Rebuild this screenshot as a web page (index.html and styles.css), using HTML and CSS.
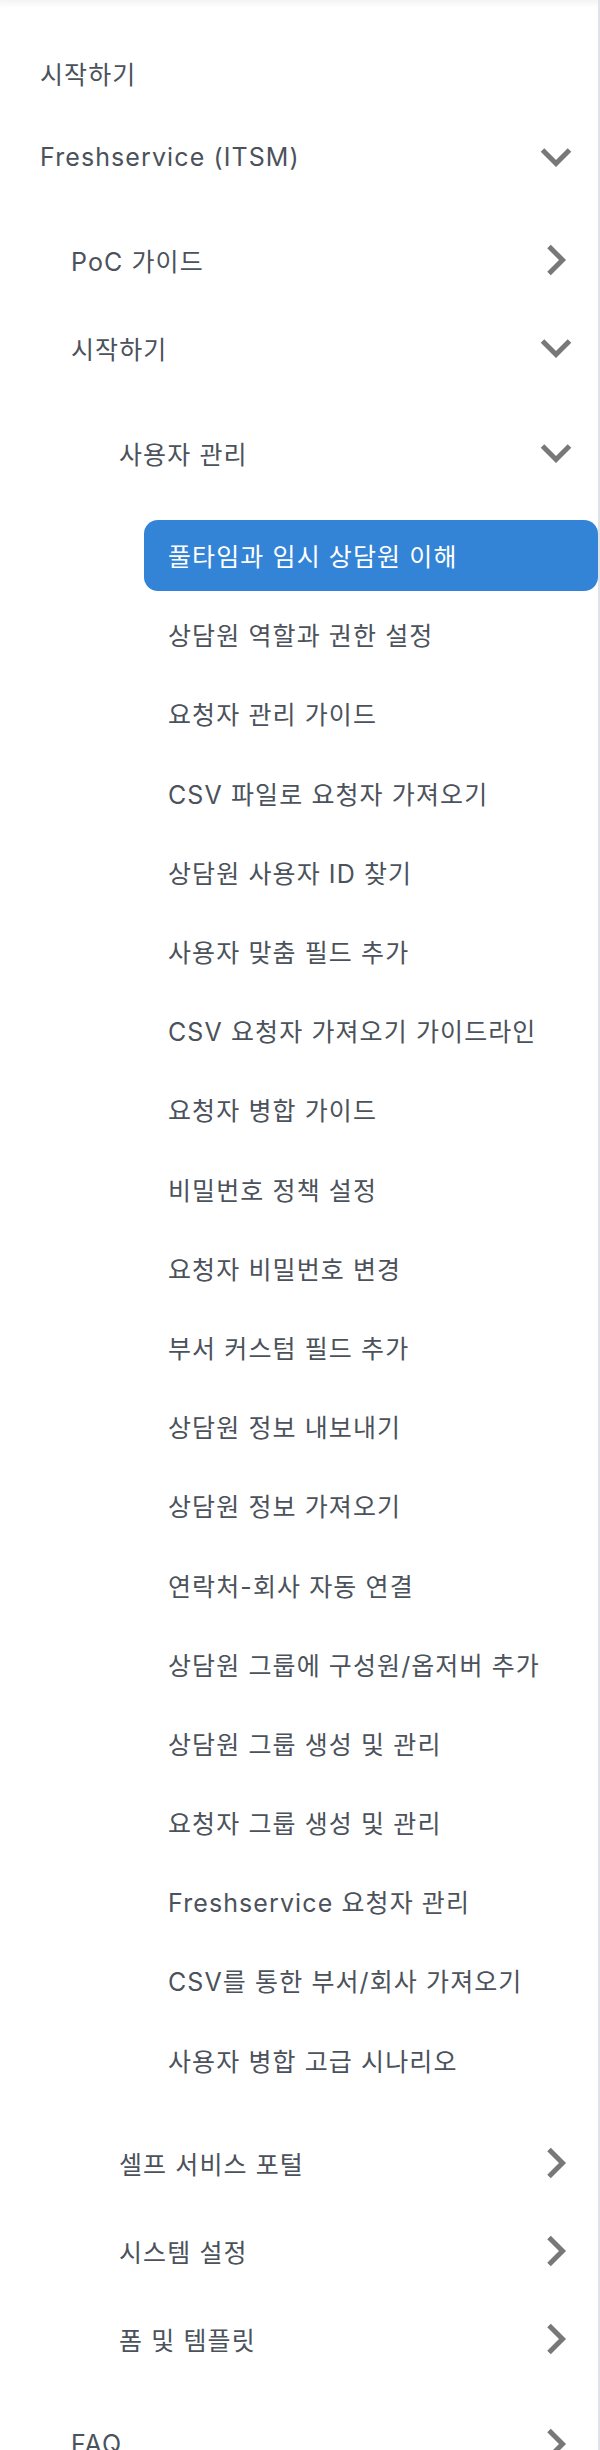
FILE: index.html
```html
<!DOCTYPE html>
<html lang="ko">
<head>
<meta charset="utf-8">
<title>Freshservice 가이드</title>
<link rel="stylesheet" href="styles.css">
</head>
<body>
<nav class="sidebar">
  <ul class="tree">
    <li><div class="row r0"><span class="label">시작하기</span></div></li>
    <li>
      <div class="row r0"><span class="label">Freshservice (ITSM)</span>
        <svg class="chev" viewBox="0 0 40 40"><path d="M6.5 13 L20 26.5 L33.5 13"/></svg>
      </div>
      <ul class="tree sub">
        <li><div class="row r1"><span class="label">PoC 가이드</span>
          <svg class="chev" viewBox="0 0 40 40"><path d="M13 6.5 L26.5 20 L13 33.5"/></svg></div></li>
        <li>
          <div class="row r1"><span class="label">시작하기</span>
            <svg class="chev" viewBox="0 0 40 40"><path d="M6.5 13 L20 26.5 L33.5 13"/></svg></div>
          <ul class="tree sub">
            <li>
              <div class="row r2"><span class="label">사용자 관리</span>
                <svg class="chev" viewBox="0 0 40 40"><path d="M6.5 13 L20 26.5 L33.5 13"/></svg></div>
              <ul class="leaves">
                <li class="leaf active">풀타임과 임시 상담원 이해</li>
                <li class="leaf">상담원 역할과 권한 설정</li>
                <li class="leaf">요청자 관리 가이드</li>
                <li class="leaf">CSV 파일로 요청자 가져오기</li>
                <li class="leaf">상담원 사용자 ID 찾기</li>
                <li class="leaf">사용자 맞춤 필드 추가</li>
                <li class="leaf">CSV 요청자 가져오기 가이드라인</li>
                <li class="leaf">요청자 병합 가이드</li>
                <li class="leaf">비밀번호 정책 설정</li>
                <li class="leaf">요청자 비밀번호 변경</li>
                <li class="leaf">부서 커스텀 필드 추가</li>
                <li class="leaf">상담원 정보 내보내기</li>
                <li class="leaf">상담원 정보 가져오기</li>
                <li class="leaf">연락처-회사 자동 연결</li>
                <li class="leaf">상담원 그룹에 구성원/옵저버 추가</li>
                <li class="leaf">상담원 그룹 생성 및 관리</li>
                <li class="leaf">요청자 그룹 생성 및 관리</li>
                <li class="leaf">Freshservice 요청자 관리</li>
                <li class="leaf">CSV를 통한 부서/회사 가져오기</li>
                <li class="leaf">사용자 병합 고급 시나리오</li>
              </ul>
            </li>
            <li><div class="row r2"><span class="label">셀프 서비스 포털</span>
              <svg class="chev" viewBox="0 0 40 40"><path d="M13 6.5 L26.5 20 L13 33.5"/></svg></div></li>
            <li><div class="row r2"><span class="label">시스템 설정</span>
              <svg class="chev" viewBox="0 0 40 40"><path d="M13 6.5 L26.5 20 L13 33.5"/></svg></div></li>
            <li><div class="row r2"><span class="label">폼 및 템플릿</span>
              <svg class="chev" viewBox="0 0 40 40"><path d="M13 6.5 L26.5 20 L13 33.5"/></svg></div></li>
          </ul>
        </li>
        <li><div class="row r1"><span class="label">FAQ</span>
          <svg class="chev" viewBox="0 0 40 40"><path d="M13 6.5 L26.5 20 L13 33.5"/></svg></div></li>
      </ul>
    </li>
  </ul>
</nav>
</body>
</html>
```

FILE: styles.css
```css
html, body {
  margin: 0;
  padding: 0;
  background: #ffffff;
}

body {
  font-family: "Inter", "Noto Sans CJK KR", sans-serif;
  font-size: 25px;
  letter-spacing: 1.1px;
  color: #4b525b;
}

.sidebar {
  width: 600px;
  min-height: 2450px;
  box-sizing: border-box;
  border-right: 2px solid #dfe3e8;
  padding-top: 30.5px;
  box-shadow: inset 0 8px 8px -6px rgba(0, 0, 0, 0.07);
}

.tree, .leaves {
  list-style: none;
  margin: 0;
  padding: 0;
}

.tree.sub {
  padding: 17px 0;
}

.row {
  display: flex;
  align-items: center;
  justify-content: space-between;
  padding-right: 22px;
  box-sizing: border-box;
}

.r0 {
  height: 84px;
  padding-left: 40px;
}

.r1 {
  height: 88px;
  padding-left: 71px;
}

.r2 {
  height: 88px;
  padding-left: 119px;
}

.chev {
  width: 40px;
  height: 40px;
  flex: none;
  fill: none;
  stroke: #787878;
  stroke-width: 5;
}

.leaves {
  display: flex;
  flex-direction: column;
  gap: 8px;
  padding: 23px 0 24px;
}

.leaf {
  height: 71.2px;
  margin-left: 144px;
  padding-left: 24px;
  display: flex;
  align-items: center;
  border-radius: 14px;
}

.leaf.active {
  background: #3384d6;
  color: #ffffff;
}
```
